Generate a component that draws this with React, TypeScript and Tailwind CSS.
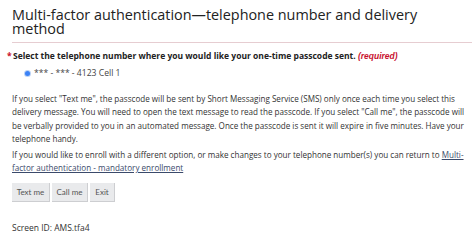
export default function App() {
  return (
    <div className="w-[474px] h-[240px] overflow-hidden bg-white text-[#333] font-['Open_Sans',sans-serif]">
      <div className="pl-[12px] pr-[2px] pt-[7.5px]">
        <h1 className="text-[14.4px] leading-[14.5px] text-[#222] font-medium pb-[5px] border-b border-[#e6cdd1]">
          <span className="block pr-[24px]">Multi-factor authentication—telephone number and delivery method</span>
        </h1>

        <div className="mt-[7px] relative text-[8.5px] font-bold text-[#222]">
          <span className="absolute -left-[5px] top-0 text-[#c8102e]">*</span>
          <span className="ml-[1px]">Select the telephone number where you would like your one-time passcode sent. </span>
          <em className="text-[#c8102e] font-['Liberation_Sans',sans-serif]">(required)</em>
        </div>

        <label className="mt-[4.5px] ml-[13px] flex items-center gap-[4px] text-[8.6px] text-[#444]">
          <span className="w-[5px] h-[5px] rounded-full bg-[#3b82f6] shadow-[0_0_0_1px_#bcd3f5]" />
          <span>*** - *** - 4123 Cell 1</span>
        </label>

        <p className="mt-[12px] text-[8.1px] leading-[13.5px]">
          If you select "Text me", the passcode will be sent by Short Messaging Service (SMS) only once each time you select this delivery message. You will need to open the text message to read the passcode. If you select "Call me", the passcode will be verbally provided to you in an automated message. Once the passcode is sent it will expire in five minutes. Have your telephone handy.
        </p>

        <p className="mt-[2px] text-[8.1px] leading-[13.5px]">
          If you would like to enroll with a different option, or make changes to your telephone number(s) you can return to{' '}
          <a href="#" className="underline text-[#3b4a6b]">Multi-factor authentication - mandatory enrollment</a>
        </p>

        <div className="mt-[8px] flex gap-[2px] font-['Lato',sans-serif] text-[8px] text-[#555]">
          <button className="h-[19.5px] w-[38px] bg-[#e9eaec] border-b border-r border-[#cdced1]">Text me</button>
          <button className="h-[19.5px] w-[36px] bg-[#e9eaec] border-b border-r border-[#cdced1]">Call me</button>
          <button className="h-[19.5px] w-[25px] bg-[#e9eaec] border-b border-r border-[#cdced1]">Exit</button>
        </div>

        <div className="mt-[20px] text-[8.5px] text-[#333]">Screen ID: AMS.tfa4</div>
      </div>
    </div>
  )
}
